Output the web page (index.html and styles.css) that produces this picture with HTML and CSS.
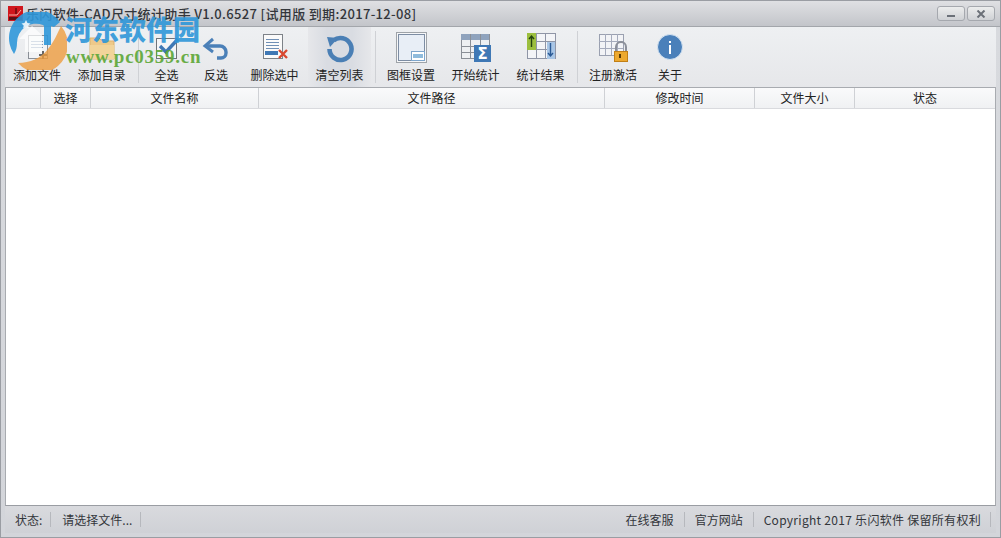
FILE: index.html
```html
<!DOCTYPE html>
<html lang="zh">
<head>
<meta charset="utf-8">
<title>乐闪软件-CAD尺寸统计助手</title>
<link rel="stylesheet" href="styles.css">
</head>
<body>
<div class="window">
  <header class="titlebar">
    <svg class="app-icon" width="15" height="15" viewBox="0 0 15 15"><rect width="15" height="15" fill="#d0161d"/><path d="M1 9h8l4-5" stroke="#f3b0a8" stroke-width="1" fill="none"/><path d="M8 2v6" stroke="#4a0a0a" stroke-width="1.200"/><rect x="1" y="11" width="13" height="3" fill="#5e1014"/></svg>
    <span class="title-text">乐闪软件-CAD尺寸统计助手 V1.0.6527 [试用版 到期:2017-12-08]</span>
    <div class="win-buttons">
      <button class="win-btn"><svg width="10" height="8" viewBox="0 0 10 8"><rect x="1" y="5" width="8" height="2" fill="#6b7078"/></svg></button>
      <button class="win-btn"><svg width="10" height="8" viewBox="0 0 10 8"><path d="M1.500 .5l7 7M8.500 .5l-7 7" stroke="#6b7078" stroke-width="2" fill="none"/></svg></button>
    </div>
  </header>

  <nav class="toolbar">
    <div class="tool w64">
      <svg class="ico crisp" width="32" height="32" viewBox="0 0 32 32"><rect x="7" y="4" width="19" height="23" fill="#f2f3f5" stroke="#8a8f96"/><path class="g" d="M10 10h12M10 13h12M10 16h12" stroke="#7f98b5"/><path class="g" d="M22 20v8M18 24h8" stroke="#666" stroke-width="2"/></svg>
      <span>添加文件</span>
    </div>
    <div class="tool w65">
      <svg class="ico" width="32" height="32" viewBox="0 0 32 32"><path d="M4 7h9l3 3h12v18H4z" fill="#eec98a" stroke="#dcb36c"/><path d="M4 14h24v14H4z" fill="#f2d49a"/></svg>
      <span>添加目录</span>
    </div>
    <div class="sep"></div>
    <div class="tool w49">
      <svg class="ico crisp" width="32" height="32" viewBox="0 0 32 32"><rect x="5" y="7" width="20" height="20" fill="#f4f5f7" stroke="#6f747a"/><path d="M9 15l6 6L27 8" stroke="#3f78b5" stroke-width="3.400" fill="none"/></svg>
      <span>全选</span>
    </div>
    <div class="tool w50">
      <svg class="ico" width="32" height="32" viewBox="0 0 32 32"><path d="M13 8l-8 7 8 6" stroke="#4b80b8" stroke-width="3" fill="none"/><path d="M6 15h14a6 6 0 0 1 6 6v1a5 5 0 0 1-5 5h-4" stroke="#4b80b8" stroke-width="3.400" fill="none"/></svg>
      <span>反选</span>
    </div>
    <div class="tool w67">
      <svg class="ico crisp" width="32" height="32" viewBox="0 0 32 32"><rect x="4" y="3" width="19" height="24" fill="#fafafa" stroke="#7d8288"/><path class="g" d="M7 8h13M7 11h13M7 14h13M7 17h13" stroke="#6f8fb5"/><rect x="6" y="20" width="13" height="4" fill="#3f78b5"/><path d="M20 19l8 8M28 19l-8 8" stroke="#d9472f" stroke-width="2.400" fill="none"/></svg>
      <span>删除选中</span>
    </div>
    <div class="tool w63 active">
      <svg class="ico" width="32" height="32" viewBox="0 0 32 32"><path d="M9.500 9.500A11 11 0 1 1 5.500 18" stroke="#4a7fb5" stroke-width="4.600" fill="none"/><path d="M3 6l11 1-8 9z" fill="#4a7fb5"/></svg>
      <span>清空列表</span>
    </div>
    <div class="sep"></div>
    <div class="tool w64">
      <svg class="ico crisp" width="32" height="32" viewBox="0 0 32 32"><rect x="1" y="1" width="30" height="30" fill="#f6f7f9" stroke="#9ea3a8"/><rect x="3" y="3" width="26" height="26" fill="#e8eef6" stroke="#7d8da3"/><rect x="16" y="20" width="13" height="9" fill="#fff" stroke="#7ea6cc"/><rect x="18" y="23" width="10" height="4" fill="#8fbbdc"/></svg>
      <span>图框设置</span>
    </div>
    <div class="tool w65">
      <svg class="ico crisp" width="32" height="32" viewBox="0 0 32 32"><rect x="1" y="3" width="28" height="24" fill="#eef0f2" stroke="#8a8f96"/><rect x="1" y="3" width="28" height="6" fill="#8fa3bd"/><path class="g" d="M10 3v24M20 3v24M1 15h28M1 21h28" stroke="#8a8f96"/><rect x="14" y="14" width="17" height="17" fill="#3f78b5"/><text class="sigma" x="22.500" y="28">Σ</text></svg>
      <span>开始统计</span>
    </div>
    <div class="tool w65">
      <svg class="ico crisp" width="32" height="32" viewBox="0 0 32 32"><rect x="2" y="2" width="28" height="25" fill="#f3f4f7" stroke="#8f95a6"/><path class="g" d="M11 2v25M20 2v25M2 10h28M2 18h28" stroke="#8f95a6"/><rect x="2" y="2" width="9" height="17" fill="#9cbf3f"/><path d="M6.500 16V5M4 8l2.500-3L9 8" stroke="#24420f" stroke-width="1.400" fill="none"/><rect x="22" y="11" width="8" height="17" fill="#a9c6e6"/><path d="M25.500 12v13M23 22l2.500 3 2.500-3" stroke="#2a5a95" stroke-width="1.400" fill="none"/></svg>
      <span>统计结果</span>
    </div>
    <div class="sep"></div>
    <div class="tool w64">
      <svg class="ico crisp" width="32" height="32" viewBox="0 0 32 32"><rect x="2" y="3" width="24" height="21" fill="#f2f3f6" stroke="#9aa0b0"/><path class="g" d="M8 3v21M14 3v21M20 3v21M2 10h24M2 17h24" stroke="#a5abbc"/><path d="M19 20v-4a5 5 0 0 1 10 0v4" stroke="#8b8f99" stroke-width="2" fill="none"/><rect x="17" y="20" width="13" height="10" fill="#eda92f" stroke="#c17f16"/><rect x="22" y="23" width="2" height="4" fill="#5a3a05"/></svg>
      <span>注册激活</span>
    </div>
    <div class="tool w50">
      <svg class="ico" width="32" height="32" viewBox="0 0 32 32"><circle cx="16" cy="16" r="12.500" fill="#4a80ba" stroke="#d6e4f2"/><rect x="15" y="14" width="2" height="9" fill="#fff"/><rect x="15" y="10" width="2" height="2" fill="#fff"/></svg>
      <span>关于</span>
    </div>
  </nav>

  <main class="table">
    <div class="thead">
      <div class="th c-idx"></div>
      <div class="th c-sel">选择</div>
      <div class="th c-name">文件名称</div>
      <div class="th c-path">文件路径</div>
      <div class="th c-time">修改时间</div>
      <div class="th c-size">文件大小</div>
      <div class="th c-state">状态</div>
    </div>
    <div class="tbody"></div>
  </main>

  <footer class="statusbar">
    <span class="cell s-label">状态:</span>
    <span class="cell s-msg">请选择文件...</span>
    <span class="spacer"></span>
    <span class="cell s-link">在线客服</span>
    <span class="cell s-link">官方网站</span>
    <span class="cell s-copy">Copyright 2017 乐闪软件 保留所有权利</span>
  </footer>

  <div class="watermark">
    <svg class="wm-logo" width="62" height="58" viewBox="0 0 62 58">
      <path d="M9 42A27 27 0 0 1 55 10L49 15 46 14V33H39V14L38 13A19 19 0 0 0 12 31C12 35 11 39 9 42z" fill="#2f97d9" opacity=".9"/>
      <path d="M56 14A27 27 0 0 1 13 51C25 51 36 46 43 37 49 30 52 22 56 14z" fill="#ee9c3e" opacity=".8"/>
      <path d="M14 27L27 14l10 9v17H20V27z" fill="#fff" opacity=".7"/>
      <path d="M21 8l1.500 3 3 .5-2.200 2 .6 3-2.900-1.500-2.900 1.500.6-3-2.200-2 3-.5z" fill="#fff" opacity=".85"/>
    </svg>
    <div class="wm-cn">河东软件园</div>
    <div class="wm-url">www.pc0359.cn</div>
  </div>
</div>
</body>
</html>
```

FILE: styles.css
```css
* { box-sizing: border-box; }
html, body { margin: 0; padding: 0; }
body {
  width: 1001px;
  height: 538px;
  overflow: hidden;
  font-family: "Noto Sans CJK SC", "Liberation Sans", sans-serif;
  font-size: 12px;
  color: #222;
}
.window {
  position: relative;
  width: 1001px;
  height: 538px;
  display: flex;
  flex-direction: column;
  padding: 0 4px 4px;
  background: linear-gradient(#c9cbd0, #d8dade 30px, #d3d5da);
  border: 1px solid #9a9da3;
}
.titlebar {
  height: 26px;
  flex: none;
  display: flex;
  align-items: center;
  margin: 0 -4px;
  padding: 0 5px 1px 7px;
  background: linear-gradient(#dfe0e3, #c3c5ca);
  border-bottom: 1px solid #a3a6ab;
}
.app-icon { flex: none; margin-right: 3px; }
.title-text { font-size: 13px; font-weight: 500; color: #33363b; letter-spacing: .34px; white-space: nowrap; }
.win-buttons { margin-left: auto; display: flex; gap: 2px; margin-top: 1px; }
.win-btn {
  width: 28px;
  height: 15px;
  padding: 0;
  display: flex;
  align-items: center;
  justify-content: center;
  background: linear-gradient(#eceded, #cfd1d5);
  border: 1px solid #a5a8ae;
  border-radius: 3px;
}
.toolbar {
  height: 60px;
  flex: none;
  display: flex;
  align-items: stretch;
  background: linear-gradient(#eef0f2, #e6e7ea);
}
.tool {
  flex: none;
  display: flex;
  flex-direction: column;
  align-items: center;
  padding-top: 4px;
  line-height: 17px;
}
.tool span { margin-top: 3px; white-space: nowrap; }
.ico { flex: none; }
.crisp rect, .crisp .g { shape-rendering: crispEdges; }
.w49 { width: 49px; }
.w50 { width: 50px; }
.w63 { width: 63px; }
.w64 { width: 64px; }
.w65 { width: 65px; }
.w67 { width: 67px; }
.tool.active { background: linear-gradient(90deg, #e6e7ea, #d9dce2 30%, #d9dce2 70%, #e6e7ea); }
.sep {
  flex: none;
  width: 1px;
  margin: 4px 3px 4px 4px;
  background: #cfd1d5;
}
.sigma { font: bold 15px "DejaVu Sans", sans-serif; fill: #fff; text-anchor: middle; }
.table {
  flex: 1;
  display: flex;
  flex-direction: column;
  border: 1px solid #a8abb0;
  border-bottom-color: #9a9da3;
  background: #fff;
}
.thead {
  height: 21px;
  flex: none;
  display: flex;
  background: linear-gradient(#fafafb, #f0f1f3);
  border-bottom: 1px solid #d9dade;
}
.th {
  flex: none;
  text-align: center;
  line-height: 20px;
  border-right: 1px solid #cfd1d5;
}
.c-idx { width: 35px; }
.c-sel { width: 50px; }
.c-name { width: 168px; }
.c-path { width: 346px; }
.c-time { width: 150px; }
.c-size { width: 100px; }
.c-state { flex: 1; border-right: 0; }
.tbody { flex: 1; background: #fff; }
.statusbar {
  height: 27px;
  flex: none;
  display: flex;
  align-items: center;
  color: #33363b;
  background: linear-gradient(#d9dade, #cfd1d6);
}
.cell {
  line-height: 15px;
  padding: 0 8px 0 10px;
  border-right: 1px solid #b6b8bd;
  white-space: nowrap;
}
.s-msg { padding: 0 8px 0 11px; }
.spacer { flex: 1; }
.s-link { padding: 0 10px; }
.s-copy { padding: 0 9px 0 10px; letter-spacing: .29px; margin-right: 5px; }
.watermark {
  position: absolute;
  left: 0;
  top: 0;
  width: 210px;
  height: 70px;
  pointer-events: none;
}
.wm-logo { position: absolute; left: 4px; top: 11px; }
.wm-cn {
  position: absolute;
  left: 64px;
  top: 10px;
  font: 900 27px/36px "Noto Sans CJK SC", sans-serif;
  color: #2f97d9;
  opacity: .9;
  white-space: nowrap;
}
.wm-url {
  position: absolute;
  left: 65px;
  top: 45px;
  font: bold 19px/22px "Liberation Serif", serif;
  letter-spacing: .75px;
  color: #5fa83a;
  opacity: .92;
  white-space: nowrap;
}
```
